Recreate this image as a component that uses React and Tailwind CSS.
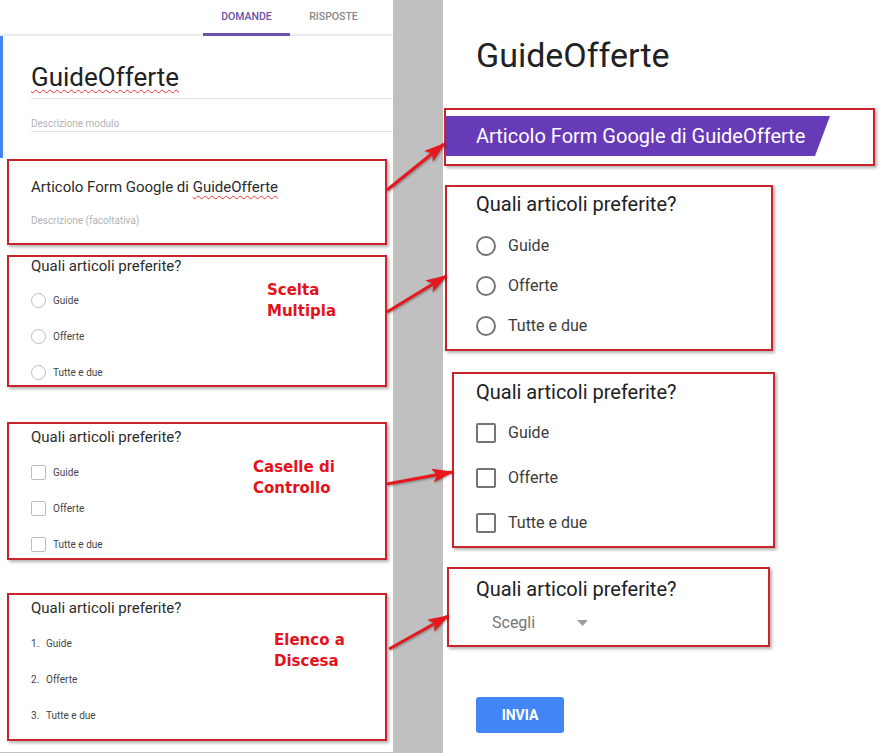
import React from 'react';

const redBox = 'border-2 border-[#c9232b] shadow-[2px_2px_3px_rgba(0,0,0,0.3)] bg-white';
const note = "font-['DejaVu_Sans',sans-serif] font-bold text-[15px] leading-[21px] text-[#e3121b]";
const options = ['Guide', 'Offerte', 'Tutte e due'];

function LeftRadio() {
  return <span className="w-[15px] h-[15px] rounded-full border border-[#bdbdbd] shrink-0"></span>;
}

function LeftCheck() {
  return <span className="w-[15px] h-[15px] rounded-[2px] border border-[#bdbdbd] shrink-0"></span>;
}

function Arrows() {
  const arrows = [
    [387, 190, 444, 144],
    [387, 312, 446, 276],
    [387, 484, 452, 472],
    [389, 649, 448, 616],
  ];
  return (
    <svg className="absolute left-0 top-0 pointer-events-none [filter:drop-shadow(1px_1px_1px_rgba(0,0,0,0.35))]" width="891" height="753">
      <defs>
        <marker id="head" markerUnits="userSpaceOnUse" markerWidth="22" markerHeight="14" refX="20" refY="7" orient="auto">
          <path d="M0,0 L22,7 L0,14 L5,7 z" fill="#e8161d" />
        </marker>
      </defs>
      {arrows.map(([x1, y1, x2, y2], i) => (
        <line key={i} x1={x1} y1={y1} x2={x2} y2={y2} stroke="#e8161d" strokeWidth="3" markerEnd="url(#head)" />
      ))}
    </svg>
  );
}

export default function App() {
  return (
    <div className="relative flex w-[891px] h-[753px] overflow-hidden bg-white font-['Roboto',sans-serif] text-[#212121]">
      {/* Editor (left) */}
      <div className="w-[393px] h-full flex flex-col bg-white border-b border-[#c4c4c4]">
        <div className="h-[36px] flex border-b-2 border-[#ececec] shrink-0">
          <div className="ml-[203px] w-[87px] -mb-[2px] flex items-center justify-center border-b-[3px] border-[#6a52a8] text-[10.5px] font-medium text-[#6a52a8]">
            DOMANDE
          </div>
          <div className="w-[87px] flex items-center justify-center text-[10.5px] font-medium text-[#8a8a8a]">
            RISPOSTE
          </div>
        </div>

        <div className="h-[122px] border-l-[3px] border-[#4285f4] pl-[28px] shrink-0">
          <div className="mt-[26px] h-[37px] border-b border-[#e3e3e3] text-[26px] leading-[30px] text-[#202124]">
            <span className="underline decoration-wavy decoration-[#e53935] decoration-1 underline-offset-[3px]">GuideOfferte</span>
          </div>
          <div className="mt-[19px] h-[14px] border-b border-[#e3e3e3] text-[10px] leading-[12px] text-[#b3b3b3]">
            Descrizione modulo
          </div>
        </div>

        <div className={`mt-px ml-[7px] w-[380px] h-[86px] pl-[22px] pt-[16px] shrink-0 ${redBox}`}>
          <div className="text-[15px] leading-[20px] text-[#2b2b2b]">
            Articolo Form Google di{' '}
            <span className="underline decoration-wavy decoration-[#e53935] decoration-1 underline-offset-[3px]">GuideOfferte</span>
          </div>
          <div className="mt-[17px] text-[10px] leading-[14px] text-[#b3b3b3]">Descrizione (facoltativa)</div>
        </div>

        <div className={`mt-[10px] ml-[7px] w-[380px] h-[132px] flex shrink-0 ${redBox}`}>
          <div className="w-[258px] pl-[22px]">
            <div className="text-[15px] leading-[18px] text-[#2b2b2b]">Quali articoli preferite?</div>
            <div className="mt-[17px] flex flex-col gap-[20px]">
              {options.map(o => (
                <div key={o} className="h-[16px] flex items-center gap-[7px] text-[10px] text-[#444]">
                  <LeftRadio />
                  <span>{o}</span>
                </div>
              ))}
            </div>
          </div>
          <div className={`pt-[23px] ${note}`}>Scelta<br />Multipla</div>
        </div>

        <div className={`mt-[35px] ml-[7px] w-[380px] h-[138px] flex shrink-0 ${redBox}`}>
          <div className="w-[244px] pl-[22px] pt-[4px]">
            <div className="text-[15px] leading-[18px] text-[#2b2b2b]">Quali articoli preferite?</div>
            <div className="mt-[18px] flex flex-col gap-[20px]">
              {options.map(o => (
                <div key={o} className="h-[16px] flex items-center gap-[7px] text-[10px] text-[#444]">
                  <LeftCheck />
                  <span>{o}</span>
                </div>
              ))}
            </div>
          </div>
          <div className={`pt-[33px] ${note}`}>Caselle di<br />Controllo</div>
        </div>

        <div className={`mt-[33px] ml-[7px] w-[380px] h-[148px] flex shrink-0 ${redBox}`}>
          <div className="w-[265px] pl-[22px] pt-[4px]">
            <div className="text-[15px] leading-[18px] text-[#2b2b2b]">Quali articoli preferite?</div>
            <div className="mt-[18px] flex flex-col gap-[20px]">
              {options.map((o, i) => (
                <div key={o} className="h-[16px] flex items-center text-[10px] text-[#444]">
                  <span className="w-[15px]">{i + 1}.</span>
                  <span>{o}</span>
                </div>
              ))}
            </div>
          </div>
          <div className={`pt-[35px] ${note}`}>Elenco a<br />Discesa</div>
        </div>
      </div>

      {/* gray gutter */}
      <div className="w-[50px] h-full bg-[#c0c0c0] shrink-0"></div>

      {/* Preview (right) */}
      <div className="flex-1 h-full flex flex-col bg-white">
        <div className="pt-[35px] pl-[33px] text-[34px] leading-[40px] text-[#202124]">GuideOfferte</div>

        <div className={`mt-[33px] ml-px w-[431px] h-[58px] pt-[6px] shrink-0 ${redBox}`}>
          <div className="h-[40px] w-[384px] bg-[#673ab7] pl-[30px] flex items-center text-[20px] text-white [clip-path:polygon(0_0,100%_0,calc(100%-15px)_100%,0_100%)]">
            Articolo Form Google di GuideOfferte
          </div>
        </div>

        <div className={`mt-[19px] ml-[2px] w-[328px] h-[166px] pl-[29px] pt-[5px] shrink-0 ${redBox}`}>
          <div className="text-[20px] leading-[24px] text-[#202124]">Quali articoli preferite?</div>
          <div className="mt-[20px] flex flex-col gap-[20px]">
            {options.map(o => (
              <div key={o} className="h-[20px] flex items-center gap-[12px] text-[16px] text-[#3c3c3c]">
                <span className="w-[20px] h-[20px] rounded-full border-2 border-[#757575] shrink-0"></span>
                <span>{o}</span>
              </div>
            ))}
          </div>
        </div>

        <div className={`mt-[21px] ml-[9px] w-[323px] h-[176px] pl-[22px] pt-[6px] shrink-0 ${redBox}`}>
          <div className="text-[20px] leading-[24px] text-[#202124]">Quali articoli preferite?</div>
          <div className="mt-[19px] flex flex-col gap-[25px]">
            {options.map(o => (
              <div key={o} className="h-[20px] flex items-center gap-[12px] text-[16px] text-[#3c3c3c]">
                <span className="w-[20px] h-[20px] rounded-[2px] border-2 border-[#757575] shrink-0"></span>
                <span>{o}</span>
              </div>
            ))}
          </div>
        </div>

        <div className={`mt-[19px] ml-[4px] w-[323px] h-[80px] pl-[27px] pt-[8px] shrink-0 ${redBox}`}>
          <div className="text-[20px] leading-[24px] text-[#202124]">Quali articoli preferite?</div>
          <div className="mt-[12px] pl-[16px] flex items-center">
            <span className="w-[85px] text-[16px] leading-[20px] text-[#757575]">Scegli</span>
            <svg width="11" height="6" viewBox="0 0 11 6">
              <path d="M0 0 L11 0 L5.5 6 z" fill="#9e9e9e" />
            </svg>
          </div>
        </div>

        <div className="mt-[50px] ml-[33px] w-[88px] h-[36px] rounded-[3px] bg-[#4285f4] flex items-center justify-center text-[14px] font-bold text-white shrink-0">
          INVIA
        </div>
      </div>

      <Arrows />
    </div>
  );
}
